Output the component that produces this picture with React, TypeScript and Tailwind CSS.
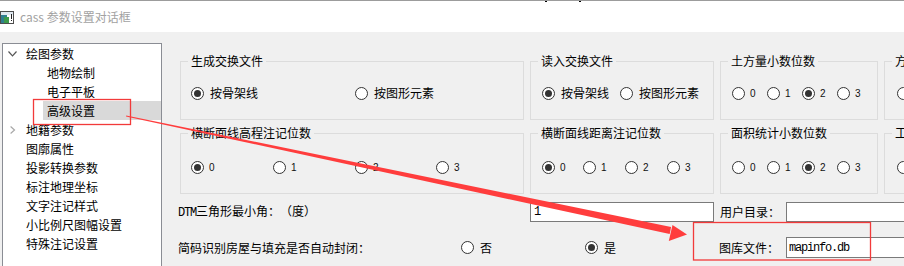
import React from "react";

const cjk = "font-['Noto_Sans_CJK_SC',sans-serif]";
const mono = "font-['Liberation_Mono','Noto_Sans_CJK_SC',monospace]";
const num = "font-['Liberation_Sans',sans-serif]";

function Radio({ on }: { on?: boolean }) {
  return (
    <span className="flex h-[13px] w-[13px] shrink-0 items-center justify-center rounded-full border border-[#333] bg-white">
      {on && <span className="h-[7px] w-[7px] rounded-full bg-[#333]" />}
    </span>
  );
}

function Opt({ label, on, digit, className = "" }: { label: string; on?: boolean; digit?: boolean; className?: string }) {
  return (
    <div className={`flex h-[16px] shrink-0 items-center ${className}`}>
      <Radio on={on} />
      {digit ? (
        <span className={`ml-[5px] text-[10px] text-[#111] ${num}`}>{label}</span>
      ) : (
        <span className={`ml-[6px] text-[12px] leading-[16px] text-black ${cjk}`}>{label}</span>
      )}
    </div>
  );
}

function Group({ title, className, children }: { title: string; className: string; children: React.ReactNode }) {
  return (
    <div className={`relative shrink-0 border border-[#dcdcdc] ${className}`}>
      <span className={`absolute left-[7px] top-[-9px] whitespace-nowrap bg-[#f0f0f0] px-[3px] text-[12px] leading-[16px] text-black ${cjk}`}>
        {title}
      </span>
      {children}
    </div>
  );
}

function TreeTop({ label, open }: { label: string; open?: boolean }) {
  return (
    <div className="flex h-[19px] items-center">
      <span className="flex w-[23px] items-center">
        {open === true && (
          <svg width="10" height="6" className="ml-[5px]">
            <polyline points="0.5,0.5 4.5,4.8 8.5,0.5" fill="none" stroke="#555" strokeWidth="1.2" />
          </svg>
        )}
        {open === false && (
          <svg width="6" height="8" className="ml-[7px]">
            <polyline points="0.6,0.5 4.5,4 0.6,7.5" fill="none" stroke="#a8a8a8" strokeWidth="1.2" />
          </svg>
        )}
      </span>
      <span className={`text-[12px] leading-[16px] text-black ${cjk}`}>{label}</span>
    </div>
  );
}

function TreeChild({ label, selected }: { label: string; selected?: boolean }) {
  return (
    <div className={`ml-[40px] flex h-[19px] items-center pl-[4px] ${selected ? "bg-[#d9d9d9]" : ""}`}>
      <span className={`text-[12px] leading-[16px] text-black ${cjk}`}>{label}</span>
    </div>
  );
}

export default function App() {
  const others = ["图廓属性", "投影转换参数", "标注地理坐标", "文字注记样式", "小比例尺图幅设置", "特殊注记设置"];

  return (
    <div className="relative h-[266px] w-[904px] overflow-hidden bg-[#f0f0f0]">
      {/* title bar */}
      <div className="relative flex h-[32px] items-center border-t border-[#9c9c9c] bg-white">
        <span className="absolute left-[545px] top-0 h-[1px] w-[2px] bg-black" />
        <span className="absolute left-[579px] top-0 h-[1px] w-[2px] bg-black" />
        <svg width="14" height="13" className="mt-[1px] shrink-0">
          <rect x="0.5" y="0.5" width="13" height="12" fill="#fff" stroke="#4d4d4d" />
          <rect x="1" y="4" width="6" height="8" fill="#2f7f8f" />
          <rect x="4" y="6" width="5" height="6" fill="#3c9a4c" />
          <rect x="1" y="1" width="12" height="3" fill="#dfe8f0" />
          <rect x="11" y="3" width="1" height="5" fill="#222" />
          <rect x="11" y="9" width="1" height="1" fill="#222" />
        </svg>
        <span className={`ml-[6px] text-[12px] leading-[16px] text-[#a2a2a2] ${cjk}`}>cass 参数设置对话框</span>
      </div>

      <div className="flex">
        {/* tree */}
        <div className="ml-[2px] mt-[11px] h-[240px] w-[160px] shrink-0 border border-[#8a8d94] bg-white">
          <TreeTop label="绘图参数" open />
          <TreeChild label="地物绘制" />
          <TreeChild label="电子平板" />
          <TreeChild label="高级设置" selected />
          <TreeTop label="地籍参数" open={false} />
          {others.map((o) => (
            <TreeTop key={o} label={o} />
          ))}
        </div>

        {/* settings */}
        <div className="flex min-w-0 flex-1 flex-col pl-[16px] pt-[29px]">
          <div className="ml-[2px] flex gap-[6px]">
            <Group title="生成交换文件" className="h-[59px] w-[344px]">
              <div className="flex pl-[10px] pt-[23px]">
                <Opt label="按骨架线" on className="w-[164px]" />
                <Opt label="按图形元素" />
              </div>
            </Group>
            <Group title="读入交换文件" className="h-[59px] w-[184px]">
              <div className="flex pl-[11px] pt-[23px]">
                <Opt label="按骨架线" on className="w-[78px]" />
                <Opt label="按图形元素" />
              </div>
            </Group>
            <Group title="土方量小数位数" className="h-[59px] w-[158px]">
              <div className="flex pl-[11px] pt-[23px]">
                <Opt label="0" digit className="w-[35px]" />
                <Opt label="1" digit className="w-[35px]" />
                <Opt label="2" digit on className="w-[35px]" />
                <Opt label="3" digit />
              </div>
            </Group>
            <Group title="方格网" className="h-[59px] w-[80px]">
              <div className="flex pl-[12px] pt-[23px]">
                <Opt label="0" digit />
              </div>
            </Group>
          </div>

          <div className="ml-[2px] mt-[13px] flex gap-[6px]">
            <Group title="横断面线高程注记位数" className="h-[61px] w-[344px]">
              <div className="flex pl-[10px] pt-[25px]">
                <Opt label="0" digit on className="w-[82px]" />
                <Opt label="1" digit className="w-[82px]" />
                <Opt label="2" digit className="w-[81px]" />
                <Opt label="3" digit />
              </div>
            </Group>
            <Group title="横断面线距离注记位数" className="h-[61px] w-[184px]">
              <div className="flex pl-[11px] pt-[25px]">
                <Opt label="0" digit on className="w-[41px]" />
                <Opt label="1" digit className="w-[42px]" />
                <Opt label="2" digit className="w-[42px]" />
                <Opt label="3" digit />
              </div>
            </Group>
            <Group title="面积统计小数位数" className="h-[61px] w-[158px]">
              <div className="flex pl-[11px] pt-[25px]">
                <Opt label="0" digit className="w-[35px]" />
                <Opt label="1" digit className="w-[35px]" />
                <Opt label="2" digit on className="w-[35px]" />
                <Opt label="3" digit />
              </div>
            </Group>
            <Group title="工程" className="h-[61px] w-[80px]">
              <div className="flex pl-[12px] pt-[25px]">
                <Opt label="0" digit />
              </div>
            </Group>
          </div>

          <div className="mt-[8px] flex h-[20px] items-center">
            <span className={`w-[352px] shrink-0 text-[12px] leading-[16px] text-black [text-spacing-trim:space-all] ${cjk}`}>
              <span className={`text-[12px] tracking-[-1.2px] ${mono}`}>DTM</span>三角形最小角：（度）
            </span>
            <div className="flex h-[20px] w-[184px] shrink-0 items-center border border-[#7a7a7a] bg-white pl-[3px]">
              <span className={`text-[12px] text-black ${mono}`}>1</span>
            </div>
            <span className={`ml-[6px] w-[66px] shrink-0 text-[12px] leading-[16px] text-black ${cjk}`}>用户目录：</span>
            <div className="h-[20px] w-[200px] shrink-0 border border-[#7a7a7a] bg-white" />
          </div>

          <div className="mt-[15px] flex h-[21px] items-center">
            <span className={`w-[283px] shrink-0 text-[12px] leading-[16px] text-black ${cjk}`}>简码识别房屋与填充是否自动封闭：</span>
            <Opt label="否" className="w-[124px]" />
            <Opt label="是" on className="w-[134px]" />
            <span className={`w-[67px] shrink-0 text-[12px] leading-[16px] text-black ${cjk}`}>图库文件：</span>
            <div className="flex h-[21px] w-[200px] shrink-0 items-center border border-[#7a7a7a] bg-white pl-[2px]">
              <span className={`text-[12px] tracking-[-1.2px] text-black ${mono}`}>mapinfo.db</span>
            </div>
          </div>
        </div>
      </div>

      {/* red annotation overlay */}
      <svg width="904" height="266" className="pointer-events-none absolute left-0 top-0">
        <rect x="33.5" y="99.5" width="97" height="25" fill="none" stroke="#f23a3a" strokeWidth="1.3" />
        <rect x="693.5" y="222.5" width="177" height="37.5" fill="none" stroke="#f23a3a" strokeWidth="1.3" />
        <polygon points="126,116.4 126.2,115.4 671.1,227 669.7,234" fill="#ff3d3d" />
        <polygon points="687,234.5 672.5,225 668.8,241" fill="#ff3d3d" />
      </svg>
    </div>
  );
}
